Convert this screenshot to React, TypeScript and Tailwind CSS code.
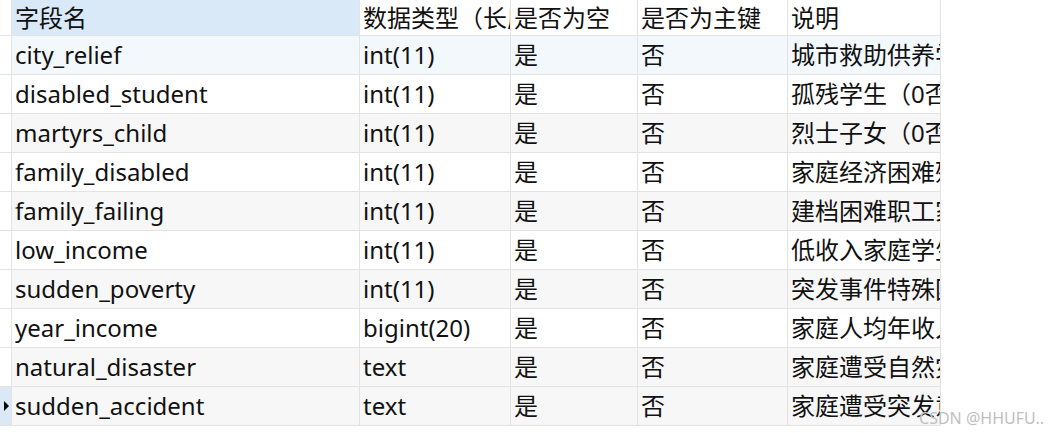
const rows: [string, string, string][] = [
  ["city_relief", "int(11)", "城市救助供养学生"],
  ["disabled_student", "int(11)", "孤残学生（0否"],
  ["martyrs_child", "int(11)", "烈士子女（0否"],
  ["family_disabled", "int(11)", "家庭经济困难残"],
  ["family_failing", "int(11)", "建档困难职工家"],
  ["low_income", "int(11)", "低收入家庭学生"],
  ["sudden_poverty", "int(11)", "突发事件特殊困"],
  ["year_income", "bigint(20)", "家庭人均年收入"],
  ["natural_disaster", "text", "家庭遭受自然灾"],
  ["sudden_accident", "text", "家庭遭受突发意"],
];
const cell = "border-r border-b border-[#e3e3e3] px-[3px] overflow-hidden whitespace-nowrap flex items-center";
export default function App() {
  return (
    <div className="w-[1056px] h-[433px] bg-white relative overflow-hidden text-[24px] leading-none text-[#111]" style={{ fontFamily: '"Noto Sans", "Noto Sans CJK SC", sans-serif' }}>
      <div className="grid w-[941px] grid-cols-[12px_348px_151px_127px_150px_153px] grid-rows-[36px_repeat(10,39px)]">
        <div className="border-r border-b border-[#e3e3e3]" />
        <div className={cell + " bg-[#d9e9f8]"}>字段名</div>
        <div className={cell}>数据类型（长度）</div>
        <div className={cell}>是否为空</div>
        <div className={cell}>是否为主键</div>
        <div className={cell}>说明</div>
        {rows.map((r, i) => {
          const bg = i === 0 ? "bg-[#f3f8fd]" : i % 2 === 0 || i === 9 ? "bg-[#f7f7f7]" : "bg-white";
          return [
            <div key={"g" + i} className={"border-r border-b border-[#e3e3e3] flex items-center " + (i === 9 ? "bg-[#dbe8f5]" : "")}>
              {i === 9 && <div className="w-0 h-0 border-y-[5px] border-y-transparent border-l-[5px] border-l-black ml-[4px]" />}
            </div>,
            <div key={"a" + i} className={cell + " " + bg}>{r[0]}</div>,
            <div key={"b" + i} className={cell + " " + bg}>{r[1]}</div>,
            <div key={"c" + i} className={cell + " " + bg}>是</div>,
            <div key={"d" + i} className={cell + " " + bg}>否</div>,
            <div key={"e" + i} className={cell + " " + bg}>{r[2]}</div>,
          ];
        })}
      </div>
      <div className="absolute right-[12px] bottom-[7px] text-[16px] text-[#c0c0c0]">CSDN @HHUFU..</div>
    </div>
  );
}
